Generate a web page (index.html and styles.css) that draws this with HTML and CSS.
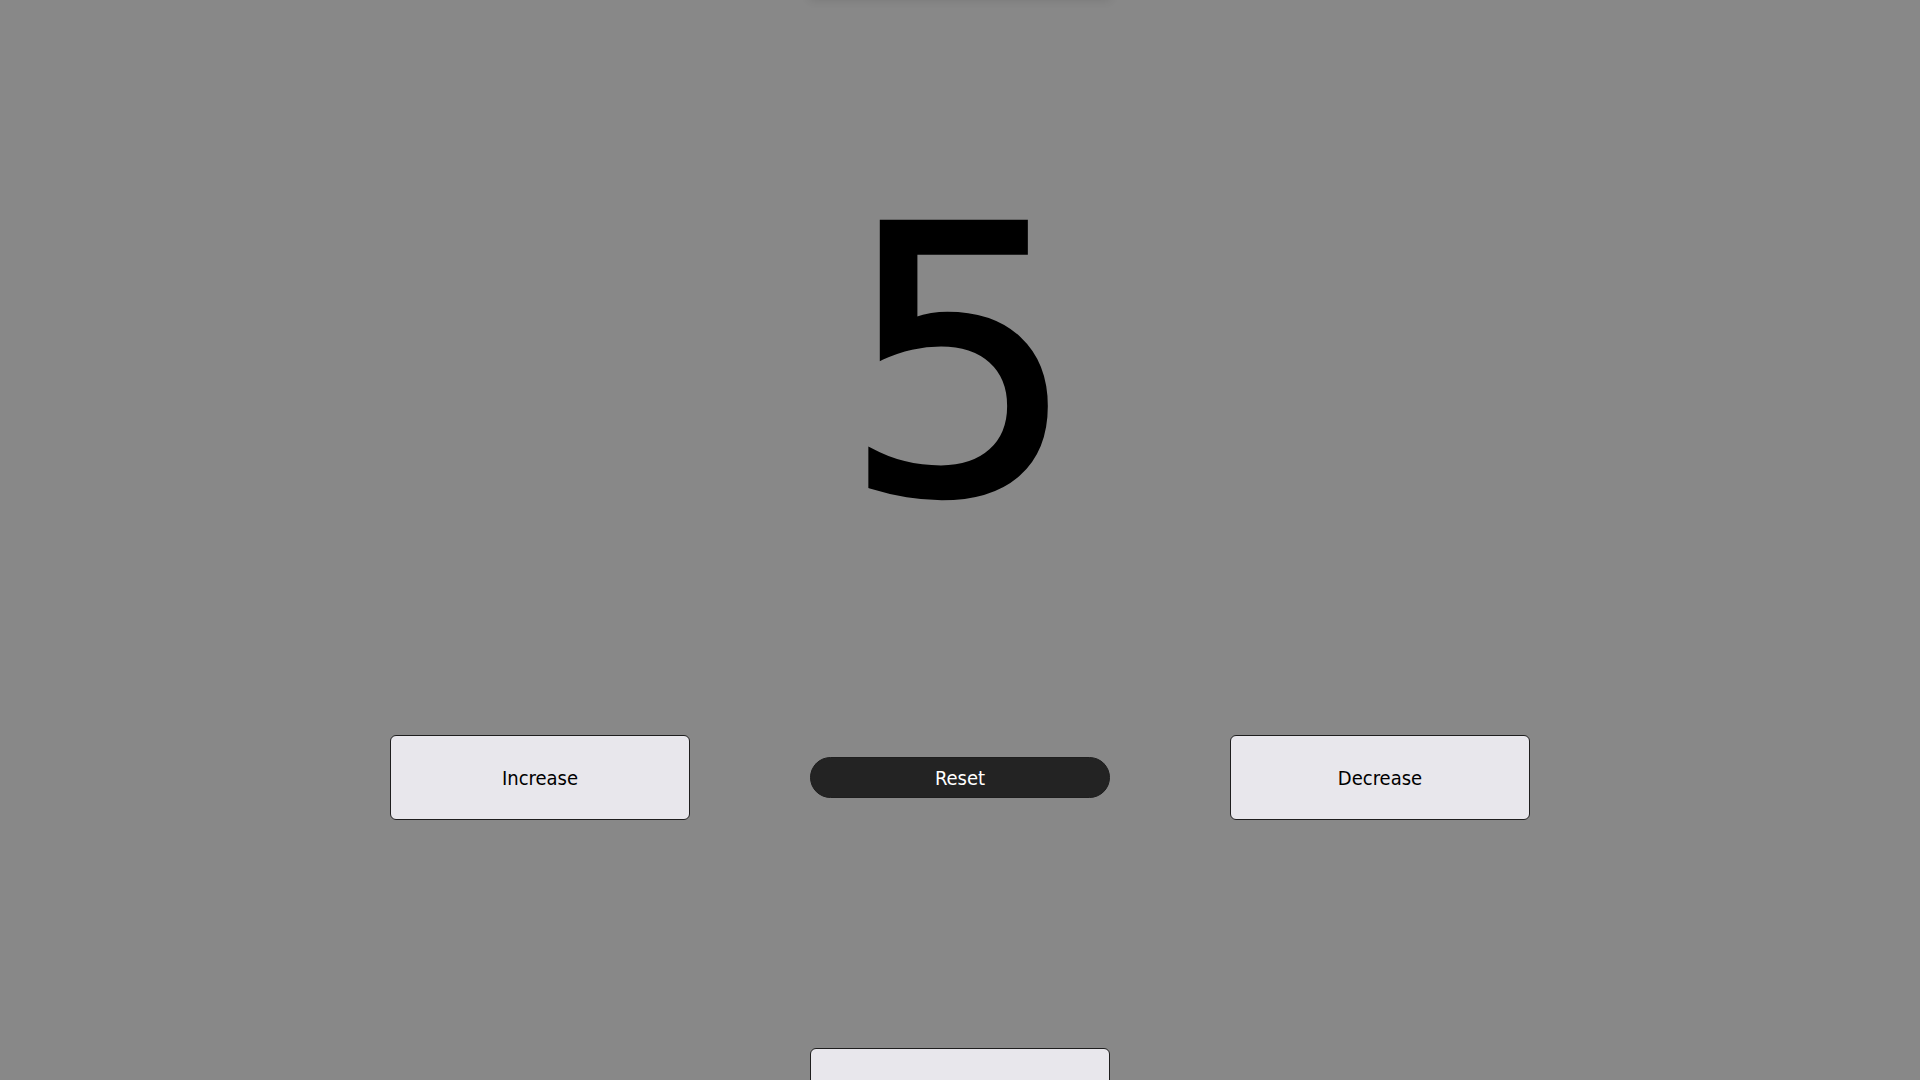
FILE: index.html
```html
<!DOCTYPE html>
<html lang="en">
<head>
<meta charset="utf-8">
<title>Counter</title>
<link rel="stylesheet" href="styles.css">
</head>
<body>
<div class="top-shadow"></div>
<main class="app">
  <div class="count">5</div>
  <div class="controls">
    <button class="btn btn-light">Increase</button>
    <button class="btn btn-dark">Reset</button>
    <button class="btn btn-light">Decrease</button>
  </div>
  <div class="extra">
    <button class="btn btn-light"></button>
  </div>
</main>
</body>
</html>
```

FILE: styles.css
```css
html, body {
  margin: 0;
  padding: 0;
  height: 100%;
  overflow: hidden;
}
body {
  background: #888888;
  font-family: "DejaVu Sans Condensed", "DejaVu Sans", sans-serif;
  position: relative;
}
.top-shadow {
  position: absolute;
  left: 810px;
  top: -20px;
  width: 300px;
  height: 20px;
  box-shadow: 0 0 10px rgba(0, 0, 0, 0.12);
}
.app {
  display: flex;
  flex-direction: column;
  align-items: center;
  padding-top: 179px;
}
.count {
  font-family: "DejaVu Sans", sans-serif;
  font-size: 372px;
  line-height: 372px;
  height: 372px;
  color: #000;
  -webkit-text-stroke: 4px #000;
  text-align: center;
}
.controls {
  display: flex;
  align-items: center;
  gap: 120px;
  margin-top: 184px;
}
.extra {
  margin-top: 228px;
}
.btn {
  box-sizing: border-box;
  width: 300px;
  font-family: "DejaVu Sans Condensed", "DejaVu Sans", sans-serif;
  font-size: 20px;
  border: 1px solid #1e1e1e;
  padding: 0;
  cursor: pointer;
}
.btn-light {
  height: 85px;
  background: #e8e7ec;
  color: #000;
  border-radius: 6px;
}
.btn-dark {
  height: 41px;
  background: #232323;
  color: #fff;
  border-radius: 21px;
}
```
